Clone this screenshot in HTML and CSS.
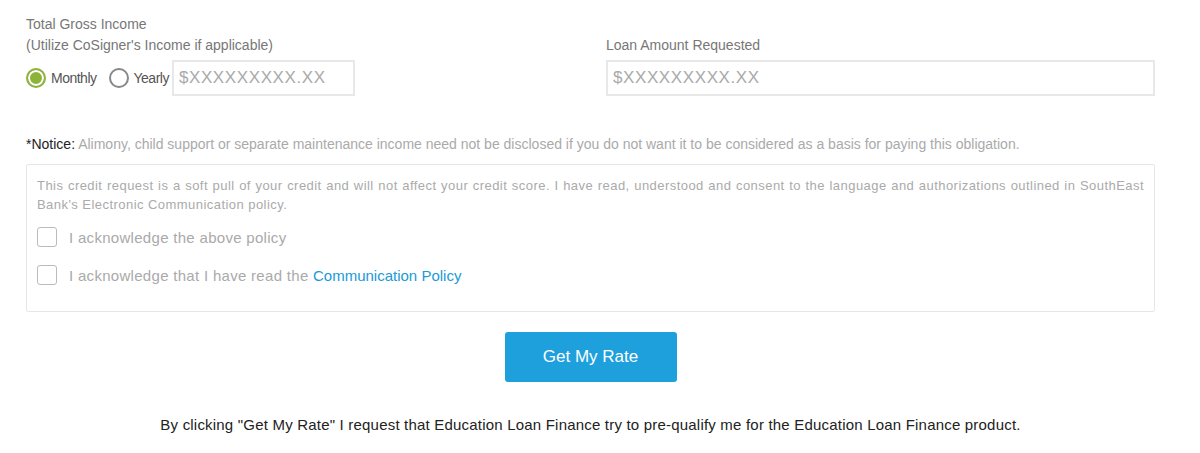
FILE: index.html
```html
<!DOCTYPE html>
<html lang="en">
<head>
    <meta charset="UTF-8">
    <title>Get My Rate</title>
    <link rel="stylesheet" href="styles.css">
</head>
<body>
    <form class="rate-form">
        <div class="row">
            <div class="col">
                <label class="label">Total Gross Income<br>(Utilize CoSigner's Income if applicable)</label>
                <div class="income-line">
                    <label class="radio"><span class="dot checked"></span>Monthly</label>
                    <label class="radio"><span class="dot"></span>Yearly</label>
                    <input class="field small" type="text" placeholder="$XXXXXXXXX.XX">
                </div>
            </div>
            <div class="col">
                <label class="label">Loan Amount Requested</label>
                <input class="field" type="text" placeholder="$XXXXXXXXX.XX">
            </div>
        </div>

        <p class="notice"><b>*Notice:</b> Alimony, child support or separate maintenance income need not be disclosed if you do not want it to be considered as a basis for paying this obligation.</p>

        <div class="consent">
            <p>This credit request is a soft pull of your credit and will not affect your credit score. I have read, understood and consent to the language and authorizations outlined in SouthEast Bank's Electronic Communication policy.</p>
            <label class="check"><span class="box"></span>I acknowledge the above policy</label>
            <label class="check"><span class="box"></span>I acknowledge that I have read the&nbsp;<a href="#">Communication Policy</a></label>
        </div>

        <div class="actions">
            <button type="button" class="button">Get My Rate</button>
        </div>
        <p class="disclaimer">By clicking "Get My Rate" I request that Education Loan Finance try to pre-qualify me for the Education Loan Finance product.</p>
    </form>
</body>
</html>
```

FILE: styles.css
```css
body {
    margin: 0;
    font-family: "Liberation Sans", Arial, sans-serif;
    color: #777;
    background: #fff;
}
.rate-form {
    width: 1129px;
    margin: 0 0 0 26px;
    padding-top: 14px;
}
.row {
    display: flex;
    gap: 31px;
}
.col {
    flex: 1;
    display: flex;
    flex-direction: column;
}
.label {
    font-size: 14px;
    line-height: 21px;
    margin-bottom: 4px;
    margin-top: 0;
}
.col:last-child .label {
    margin-top: 21px;
}
.income-line {
    display: flex;
    align-items: center;
}
.radio {
    display: flex;
    align-items: center;
    font-size: 14px;
    letter-spacing: -0.5px;
    color: #555;
    margin-right: 12px;
}
.radio:nth-child(2) {
    margin-right: 3px;
}
.dot {
    width: 16px;
    height: 16px;
    border: 2px solid #888;
    border-radius: 50%;
    margin-right: 5px;
    box-sizing: content-box;
}
.dot.checked {
    border-color: #8db33a;
    background: #8db33a;
    box-shadow: inset 0 0 0 2px #fff;
}
.field {
    height: 36px;
    box-sizing: border-box;
    border: 2px solid #e8e8e8;
    padding: 0 5px;
    font-family: inherit;
    font-size: 17px;
    letter-spacing: 0.6px;
    color: #999;
    outline: none;
}
.field::placeholder {
    color: #aaa;
}
.field.small {
    width: 183px;
}
.notice {
    font-size: 14px;
    color: #aaa;
    margin: 40px 0 11px;
    line-height: 17px;
}
.notice b {
    font-weight: normal;
    color: #222;
}
.consent {
    border: 1px solid #e6e6e6;
    border-radius: 2px;
    padding: 11px 10px 22px;
    height: 148px;
    box-sizing: border-box;
}
.consent p {
    font-size: 13px;
    letter-spacing: 0.45px;
    line-height: 19px;
    color: #aaa;
    text-align: justify;
    margin: 0 0 13px;
}
.check {
    display: flex;
    align-items: center;
    font-size: 15px;
    letter-spacing: 0.3px;
    color: #aaa;
    margin-bottom: 18px;
}
.box {
    width: 18px;
    height: 18px;
    border: 1px solid #bbb;
    border-radius: 3px;
    margin-right: 12px;
}
.check a {
    color: #1b9ad6;
    text-decoration: none;
    letter-spacing: 0;
}
.actions {
    display: flex;
    justify-content: center;
    margin-top: 20px;
}
.button {
    width: 172px;
    height: 50px;
    border: none;
    border-radius: 3px;
    background-color: #1ea0dc;
    color: #fff;
    font-family: inherit;
    font-size: 17px;
    cursor: pointer;
}
.disclaimer {
    text-align: center;
    font-size: 15px;
    letter-spacing: 0.2px;
    color: #222;
    margin: 34px 0 0;
}
```
